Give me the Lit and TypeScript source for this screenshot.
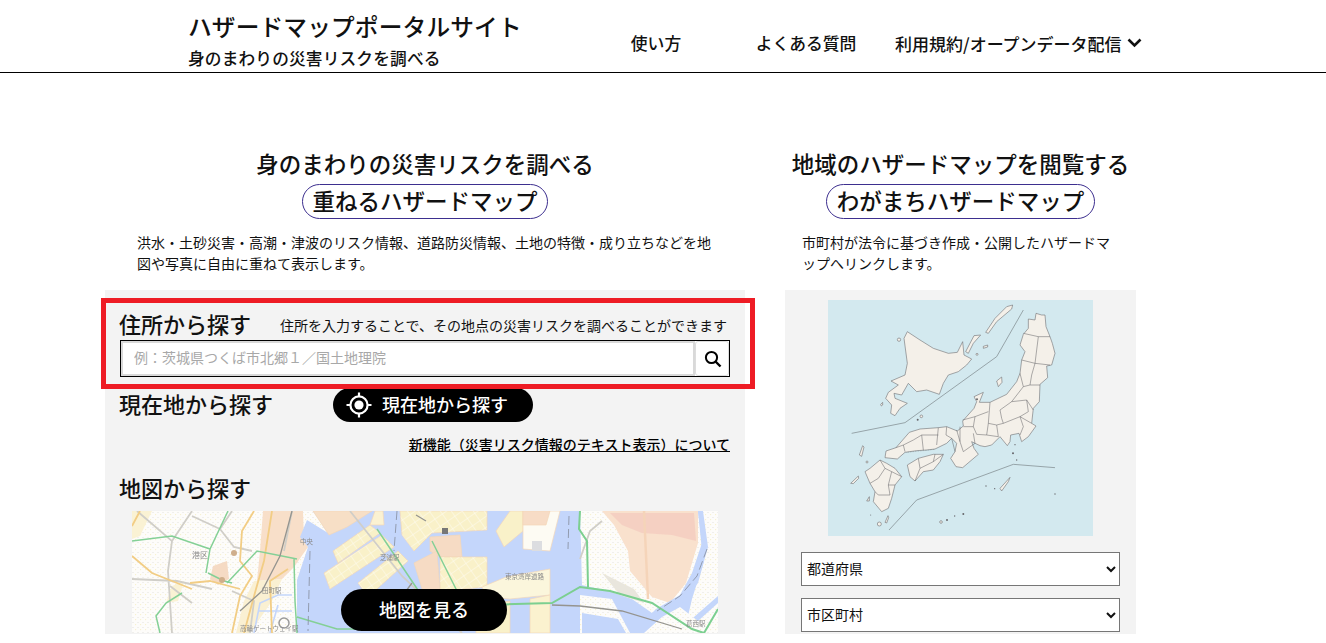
import { LitElement, html, css, svg } from "lit";
import { customElement } from "lit/decorators.js";

const addressHint = "例\uFF1A茨城県つくば市北郷\uFF11\uFF0F国土地理院";
const noticeText = "新機能\uFF08災害リスク情報のテキスト表示\uFF09について";

const japanMap = svg`
  <defs>
    <filter id="jp-soft"><feGaussianBlur stdDeviation="0.8"></feGaussianBlur></filter>
  </defs>
  <rect x="24" y="15" width="795" height="708" fill="#d3e9ef"></rect>
  <g filter="url(#jp-soft)">
    <g fill="none" stroke="#7f8a8e" stroke-width="2.2">
      <path d="M610 45L530 185L255 383L95 415"></path>
      <path d="M207 705L290 615L580 508L705 518"></path>
    </g>
    <g fill="#f4f0e9" stroke="#6f6f72" stroke-width="1.8" stroke-linejoin="round">
      <path d="M262 110L300 135L340 160L385 175L412 172L428 140L432 180L455 192L440 210L415 230L385 240L370 265L358 298L320 285L290 290L265 265L245 300L222 295L225 310L262 325L240 340L225 362L212 355L215 330L197 310L205 292L235 270L213 258L255 240L262 205L252 130Z"></path>
      <path d="M578 30L560 35L525 70L497 112L505 115L530 80L575 42Z"></path>
      <path d="M482 120L462 122L437 170L445 175L460 145Z"></path>
      <path d="M503 150L490 154L490 160L503 156Z"></path>
      <circle cx="237" cy="134" r="5"></circle>
      <circle cx="471" cy="178" r="3"></circle>
      <path d="M188 322L182 328L184 333L188 330Z"></path>
      <path d="M545 246L530 258L535 275L546 262Z"></path>
      <circle cx="304" cy="364" r="4"></circle>
      <path d="M648 55L665 60L675 60L678 95L690 125L697 145L705 175L695 210L680 213L683 248L660 268L658 320L640 340L635 385L648 393L625 425L605 440L597 415L572 420L570 440L562 452L540 425L515 450L495 455L480 452L455 440L462 460L475 478L428 518L408 515L392 490L405 470L410 445L395 430L380 445L345 462L320 465L290 467L255 472L232 492L195 488L198 468L228 458L268 412L300 402L355 398L380 395L412 408L430 393L428 378L462 340L470 320L462 305L490 292L478 322L510 322L560 298L590 260L600 235L605 195L615 170L600 150L610 118L625 100L625 72L645 75Z"></path>
      <path d="M262 510L295 490L340 478L370 478L360 500L340 525L310 530L285 558L270 545Z"></path>
      <path d="M150 520L180 495L200 505L225 520L245 545L225 570L215 610L205 640L185 650L160 620L165 590L150 565L135 530Z"></path>
      <path d="M128 452L118 480L125 484L132 456Z"></path>
      <path d="M570 547L540 580L545 588L565 560Z"></path>
      <circle cx="178" cy="687" r="6"></circle>
      <path d="M204 662L195 682L200 684L206 668Z"></path>
      <circle cx="363" cy="681" r="4"></circle>
      <circle cx="141" cy="501" r="3"></circle>
      <path d="M115 543L92 565L100 566L116 550Z"></path>
      <path d="M148 605L140 618L148 618Z"></path>
    </g>
    <g fill="none" stroke="#5f5f63" stroke-width="1.5">
      <path d="M610 115L655 125L690 125M655 125L645 205M605 195L645 205L690 210M645 205L635 240L630 270L660 270M600 235L610 275L630 270M610 275L575 320L540 345L545 370L550 385L600 365L635 385M575 320L620 315L640 345M620 315L625 350L600 365M550 385L530 390L535 425M600 365L610 395L600 420M510 322L505 385L530 390M505 385L500 420L470 418L460 395L430 395M460 395L465 365L505 350M428 375L465 365M460 415L465 445M500 420L535 425M465 445L430 470L420 440L420 395M410 405L420 440M395 430L405 470M380 395L378 420L395 430M355 398L350 450M305 420L310 465M355 420L305 420L280 435L250 450L228 458M250 450L255 470"></path>
      <path d="M295 490L300 520L285 558M300 520L340 500L370 478M345 478L340 500"></path>
      <path d="M180 495L195 520L215 530L245 545M195 520L175 550L150 565M215 530L205 570L225 570M205 570L210 600L175 600L165 590"></path>
    </g>
    <path d="M260 472L345 463" fill="none" stroke="#6f7a7d" stroke-width="1.5" stroke-dasharray="2 3"></path>
    <g fill="#66666a">
      <circle cx="471" cy="313" r="3"></circle><circle cx="293" cy="374" r="3"></circle>
      <circle cx="579" cy="475" r="3"></circle><circle cx="590" cy="495" r="2"></circle>
      <circle cx="498" cy="573" r="2"></circle><circle cx="524" cy="581" r="2"></circle>
      <circle cx="705" cy="597" r="2"></circle><circle cx="430" cy="657" r="3"></circle>
      <circle cx="404" cy="663" r="2"></circle><circle cx="381" cy="675" r="3"></circle>
      <circle cx="152" cy="660" r="1.5"></circle><circle cx="585" cy="449" r="2"></circle>
    </g>
  </g>
`;

const areaMap = svg`
  <defs>
    <pattern id="speck" width="5" height="5" patternUnits="userSpaceOnUse">
      <rect width="5" height="5" fill="#fdfcfa"></rect>
      <circle cx="1" cy="1.5" r=".5" fill="#dcdad5"></circle>
      <circle cx="3.6" cy="3.6" r=".6" fill="#f8f0c6"></circle>
    </pattern>
    <pattern id="streets" width="9" height="9" patternUnits="userSpaceOnUse" patternTransform="rotate(-35)">
      <path d="M0 0H9M0 0V9" stroke="#fff" stroke-width="1" opacity=".75"></path>
    </pattern>
    <filter id="soft"><feGaussianBlur stdDeviation=".5"></feGaussianBlur></filter>
  </defs>
  <g filter="url(#soft)">
    <rect x="-2" y="-2" width="590" height="126" fill="url(#speck)"></rect>
    <!-- built up patches west of the bay -->
    <path d="M131 0L171 0L172 30L176 36L162 56L150 68L125 70L128 40Z" fill="#f8dfc9"></path>
    <path d="M122 70L150 68L140 90L118 122L104 122L112 90Z" fill="#faf0d2"></path>
    <path d="M81 55L95 50L97 68L86 74L78 68Z" fill="#f5dac4"></path>
    <path d="M0 0L20 0L8 25L0 28Z" fill="#faf2d4"></path>
    <path d="M40 75L52 70L46 90L34 92Z" fill="#faf2d4"></path>
    <!-- water -->
    <path d="M165 122L165 69L176 36L168 26L175 9L196 22L181 0L586 0L586 122Z" fill="#c4d6fb"></path>
    <path d="M122 122L128 92L146 84L160 84M138 122L146 94M126 100L160 100" fill="none" stroke="#c4d6fb" stroke-width="1.6"></path>
    <!-- bay blocks -->
    <g fill="#f9f1c9" stroke="#f4d7b8" stroke-width=".7">
      <path d="M181 0L240 0L215 16L197 24Z" fill="#f7dfc6"></path>
      <path d="M201 40L238 14L248 22L206 52Z"></path>
      <path d="M192 62L250 24L262 36L198 78Z"></path>
      <path d="M226 72L266 40L276 50L236 86Z"></path>
      <path d="M243 0L251 0L252 14L238 14Z" fill="#fbf2d2"></path>
      <path d="M268 0L298 0L355 0L355 19L300 22L282 40L270 24Z"></path>
      <path d="M298 26L328 24L330 46L308 46L298 40Z" fill="#f6dbc4"></path>
      <path d="M308 46L355 46L355 76L308 80Z"></path>
      <path d="M282 52L305 40L308 80L292 84Z" fill="#f6dbc4"></path>
      <path d="M378 0L391 0L391 20L372 36L364 20Z"></path>
      <path d="M391 0L428 0L418 40L391 38Z" fill="#fdfbf3"></path>
      <path d="M391 0L418 0L414 14L391 14Z" fill="#f7dcc6"></path>
      <path d="M374 66L418 58L418 84L378 88L355 86L350 76Z" fill="#fbf6dc"></path>
      <path d="M398 88L418 84L418 122L398 122Z" fill="#fbf2cf"></path>
      <path d="M366 92L378 90L378 122L344 122L344 106Z"></path>
    </g>
    <g fill="url(#streets)">
      <path d="M201 40L238 14L248 22L206 52Z"></path>
      <path d="M192 62L250 24L262 36L198 78Z"></path>
      <path d="M226 72L266 40L276 50L236 86Z"></path>
      <path d="M268 0L355 0L355 19L300 22L282 40L270 24Z"></path>
      <path d="M308 46L355 46L355 76L308 80Z"></path>
    </g>
    <rect x="400" y="30" width="10" height="10" fill="#dcdde0"></rect>
    <!-- east bank, pale urban then hazard tint -->
    <path d="M448 0L566 0L570 40L560 68L544 90L520 102L500 88L476 80L450 74Z" fill="url(#speck)"></path>
    <path d="M470 0L566 0L566 32L554 72L538 92L520 86L498 60L496 40L482 14Z" fill="#f9e1cd"></path>
    <path d="M478 2L562 2L564 30L540 24L510 22L490 14Z" fill="#f4c9be" opacity=".7"></path>
    <path d="M512 0L516 88" stroke="#f5d4b9" stroke-width="2.5" fill="none"></path>
    <path d="M448 84L480 88L498 122L448 122Z" fill="url(#speck)"></path>
    <path d="M450 102L486 108L494 122L450 122Z" fill="#c4d6fb"></path>
    <path d="M570 0L586 0L586 85L562 106L552 122L560 88L572 50Z" fill="url(#speck)"></path>
    <path d="M566 0L571 0L576 36L566 72L550 92L530 105L510 122L500 122L524 98L548 84L560 62L570 32Z" fill="#c4d6fb"></path>
    <path d="M530 106L548 96L566 110L586 92L586 122L512 122Z" fill="url(#speck)"></path>
    <path d="M470 62L502 78L512 92L488 84Z" fill="#e9e6dd"></path>
    <!-- grey roads -->
    <g fill="none" stroke="#d0cec8" stroke-width="1.8">
      <path d="M5 0L40 30L36 60L40 122M40 30L60 0M0 68L45 70L80 78M100 0L88 18L102 36L120 40M60 5L88 18M38 75L60 92M118 122L122 90L100 80"></path>
      <path d="M218 0L270 65L330 122M160 0L152 40"></path>
      <path d="M448 48L458 20L470 10"></path>
    </g>
    <!-- yellow roads -->
    <g fill="none" stroke="#f2cd85" stroke-width="1.8">
      <path d="M8 0L0 15M122 0L110 20L108 50L120 65L108 85L100 122M140 0L132 50L124 78L112 122"></path>
      <path d="M58 72L78 70L108 78M0 45L20 62L60 78"></path>
      <path d="M140 122L138 70L156 58"></path>
    </g>
    <!-- expressways -->
    <path d="M0 30L40 25L78 38L96 0M78 38L74 62M76 62L92 70L100 72M95 72L125 40L165 48M162 48L163 90L165 122M165 106L205 118L240 118M28 122L24 105L34 92L50 82M245 18L300 100M300 30L325 80" fill="none" stroke="#84d096" stroke-width="1.5"></path>
    <path d="M448 0L447 18L455 30L456 76M298 100L352 94L420 92L448 76L478 80L520 92L560 118L572 122L586 98" fill="none" stroke="#7bcf90" stroke-width="2"></path>
    <path d="M160 0L148 45L130 80L108 100M420 94L448 95L490 100L550 118M268 88L280 72M284 4L294 10" fill="none" stroke="#95948f" stroke-width="1.3"></path>
    <path d="M178 40L176 120M265 0L262 40M437 5L436 38M575 38L565 65L548 85L525 100" fill="none" stroke="#8b94a6" stroke-width=".9" stroke-dasharray="9 4"></path>
    <circle cx="152" cy="112" r="5" fill="none" stroke="#9a9a9a" stroke-width="1.5"></circle>
    <circle cx="102" cy="42" r="3" fill="#cfae8b"></circle>
    <circle cx="90" cy="69" r="3" fill="#cfae8b"></circle>
    <rect x="310" y="17" width="6" height="6" fill="#777"></rect>
    <g font-family="'Noto Sans CJK JP',sans-serif" font-size="6.5" fill="#8a8a8a">
      <text x="60" y="47" font-size="8">港区</text>
      <text x="130" y="82">田町駅</text>
      <text x="248" y="49">芝浦駅</text>
      <text x="168" y="33">中央</text>
      <text x="108" y="120">高輪ゲートウェイ駅</text>
      <text x="373" y="68">東京湾岸道路</text>
      <text x="554" y="115">葛西駅</text>
    </g>
  </g>
`;

@customElement("app-root")
export class AppRoot extends LitElement {
  static styles = css`
    :host {
      display: block;
      height: 634px;
      overflow: hidden;
      background: #fff;
      color: #111;
      font-family: "Noto Sans CJK JP", "Noto Sans", sans-serif;
    }

    header {
      display: flex;
      height: 72px;
      border-bottom: 1px solid #000;
    }

    .brand {
      width: 393px;
      margin-left: 188px;
    }

    .brand h1 {
      margin: 9px 0 1px;
      font-size: 23.7px;
      line-height: 34px;
      font-weight: 500;
      letter-spacing: 0.15px;
    }

    .brand p {
      margin: 0;
      font-size: 16.7px;
      line-height: 28px;
      font-weight: 500;
      letter-spacing: 0.15px;
    }

    nav {
      display: flex;
      align-items: center;
      height: 86px;
      font-size: 16.8px;
      font-weight: 500;
      white-space: nowrap;
    }

    nav a {
      width: 150px;
      text-align: center;
    }

    nav a.menu {
      display: flex;
      align-items: center;
      gap: 5px;
      width: auto;
      margin-left: 14px;
      font-size: 17px;
    }

    main {
      display: flex;
      gap: 40px;
      padding: 76px 0 0 105px;
    }

    .left {
      width: 640px;
    }

    .right {
      width: 351px;
    }

    h2 {
      margin: 0;
      font-size: 22.5px;
      line-height: 28px;
      font-weight: 500;
      text-align: center;
    }

    .pill-row {
      display: flex;
      justify-content: center;
      margin-top: 7px;
    }

    .pill {
      padding: 0 9.5px 2px;
      border: 1px solid #3d2f8f;
      border-radius: 18px;
      font-size: 22.5px;
      line-height: 31px;
      font-weight: 500;
    }

    .desc {
      margin: 13px 0 16px;
      font-size: 14px;
      line-height: 21px;
    }

    .left .desc {
      padding-left: 32px;
      padding-right: 30px;
    }

    .right .desc {
      padding-left: 17px;
      padding-right: 25px;
    }

    .panel {
      position: relative;
      height: 344px;
      background: #f3f3f3;
    }

    .left .panel {
      padding: 19px 15px 0;
    }

    .marker {
      position: absolute;
      left: -4px;
      top: 8px;
      width: 654px;
      height: 91px;
      box-sizing: border-box;
      border: 5px solid #ee1c25;
      pointer-events: none;
    }

    .label {
      margin-left: -1px;
      font-size: 22px;
      line-height: 30px;
      font-weight: 500;
    }

    .address-head {
      display: flex;
      align-items: center;
      justify-content: space-between;
      height: 31px;
      padding-right: 3px;
      font-size: 14px;
    }

    .address-head .label {
      line-height: 26px;
      padding-bottom: 4px;
    }

    .search {
      display: flex;
      height: 37px;
      box-sizing: border-box;
      border: 1px solid #000;
      background: #fff;
    }

    .search input {
      flex: 1;
      min-width: 0;
      box-sizing: border-box;
      padding: 0 11px 3px;
      border: 2px solid #d9d9d9;
      outline: none;
      font: inherit;
      font-size: 14px;
    }

    .search input::placeholder {
      color: #a8a8a8;
      opacity: 1;
    }

    .search button {
      display: flex;
      align-items: center;
      justify-content: center;
      width: 34px;
      padding: 0 0 0 2px;
      border: 1px solid #ddd;
      border-radius: 3px;
      background: #fff;
    }

    .here {
      display: flex;
      align-items: center;
      margin-top: 11px;
    }

    .here .label {
      width: 214px;
      padding-bottom: 4px;
      line-height: 26px;
    }

    .black-btn {
      display: flex;
      align-items: center;
      justify-content: center;
      border: none;
      border-radius: 22px;
      background: #000;
      color: #fff;
      font: inherit;
      font-size: 18px;
      font-weight: 500;
    }

    .here .black-btn {
      justify-content: flex-start;
      gap: 9px;
      width: 200px;
      height: 34px;
      padding: 0 0 2px 12px;
    }

    .here .black-btn svg {
      margin-top: 2px;
    }

    .notice {
      margin-top: 12px;
      text-align: right;
      font-size: 14px;
      line-height: 21px;
      font-weight: 500;
    }

    .notice a {
      color: #000;
      text-decoration: underline;
    }

    .map-label {
      margin-top: 17px;
      margin-bottom: 9px;
    }

    .map {
      position: relative;
      width: 586px;
      height: 122px;
      margin-left: 12px;
      overflow: hidden;
    }

    .map svg {
      display: block;
    }

    .map .black-btn {
      position: absolute;
      left: 209px;
      top: 78px;
      width: 166px;
      height: 42px;
      padding: 0 0 2px;
    }

    .right .panel {
      display: flex;
      flex-direction: column;
      align-items: center;
      padding-top: 10px;
      box-sizing: border-box;
    }

    .japan {
      display: block;
      width: 265px;
      height: 236px;
    }

    select {
      display: block;
      box-sizing: border-box;
      width: 319px;
      height: 34px;
      margin-top: 16px;
      padding: 0 0 3px 1px;
      border: 1px solid #767676;
      border-radius: 0;
      background-color: #fff;
      color: #111;
      font: inherit;
      font-size: 14px;
    }

    select + select {
      margin-top: 12px;
    }
  `;

  render() {
    return html`
      <header>
        <div class="brand">
          <h1>ハザードマップポータルサイト</h1>
          <p>身のまわりの災害リスクを調べる</p>
        </div>
        <nav>
          <a>使い方</a>
          <a>よくある質問</a>
          <a class="menu">
            利用規約/オープンデータ配信
            <svg width="15" height="10" viewBox="0 0 15 10">
              <path d="M1.5 1.5L7.5 7.5L13.5 1.5" fill="none" stroke="#111" stroke-width="2.6"></path>
            </svg>
          </a>
        </nav>
      </header>
      <main>
        <section class="left">
          <h2>身のまわりの災害リスクを調べる</h2>
          <div class="pill-row"><span class="pill">重ねるハザードマップ</span></div>
          <p class="desc">
            洪水・土砂災害・高潮・津波のリスク情報、道路防災情報、土地の特徴・成り立ちなどを地図や写真に自由に重ねて表示します。
          </p>
          <div class="panel">
            <div class="address-head">
              <span class="label">住所から探す</span>
              <span>住所を入力することで、その地点の災害リスクを調べることができます</span>
            </div>
            <div class="search">
              <input placeholder=${addressHint} />
              <button aria-label="検索">
                <svg width="18" height="18" viewBox="0 0 18 18">
                  <circle cx="7.5" cy="7.5" r="5.6" fill="none" stroke="#000" stroke-width="2"></circle>
                  <path d="M11.5 11.5L16.5 16.5" stroke="#000" stroke-width="2.4"></path>
                </svg>
              </button>
            </div>
            <div class="here">
              <span class="label">現在地から探す</span>
              <button class="black-btn">
                <svg width="28" height="28" viewBox="0 0 28 28">
                  <circle cx="14" cy="14" r="8.6" fill="none" stroke="#fff" stroke-width="2.2"></circle>
                  <circle cx="14" cy="14" r="4.6" fill="#fff"></circle>
                  <path d="M14 1.5V5.5M14 22.5V26.5M1.5 14H5.5M22.5 14H26.5" stroke="#fff" stroke-width="2.2"></path>
                </svg>
                現在地から探す
              </button>
            </div>
            <div class="notice"><a>${noticeText}</a></div>
            <div class="label map-label">地図から探す</div>
            <div class="map">
              <svg width="586" height="122" viewBox="0 0 586 122">${areaMap}</svg>
              <button class="black-btn">地図を見る</button>
            </div>
            <div class="marker"></div>
          </div>
        </section>
        <section class="right">
          <h2>地域のハザードマップを閲覧する</h2>
          <div class="pill-row"><span class="pill">わがまちハザードマップ</span></div>
          <p class="desc">市町村が法令に基づき作成・公開したハザードマップへリンクします。</p>
          <div class="panel">
            <svg class="japan" viewBox="24 15 795 708" preserveAspectRatio="none">${japanMap}</svg>
            <select><option>都道府県</option></select>
            <select><option>市区町村</option></select>
          </div>
        </section>
      </main>
    `;
  }
}
